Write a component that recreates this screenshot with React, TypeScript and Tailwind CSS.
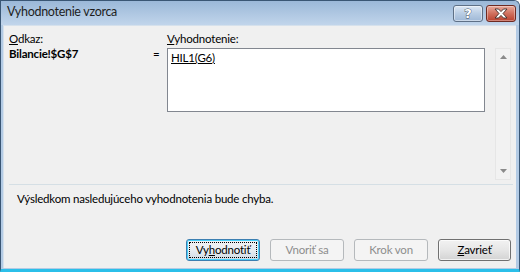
export default function App() {
  const f = "font-['Lato',sans-serif]";
  return (
    <div className={`w-[520px] h-[272px] bg-white ${f} text-black`}>
      <div className="w-[520px] h-[272px] flex flex-col bg-[#b3cbe5] border-l border-t border-r border-[#3a5674] rounded-tr-[6px] overflow-hidden border-b-[3px] border-b-[#2bbfe9]">
        {/* title bar */}
        <div className="h-[24px] shrink-0 flex items-start bg-gradient-to-b from-[#9bb8d8] to-[#c1d5eb] pl-[6px] pr-[3px]">
          <div className="pt-[3px] text-[12.5px] leading-[16px] tracking-[-0.3px] text-[#1e1e1e]">Vyhodnotenie vzorca</div>
          <div className="flex-1" />
          <div className="flex gap-[3px] pt-[4px]">
            <div className="w-[30px] h-[17px] rounded-[3px] border border-[#5e7086] bg-gradient-to-b from-[#dde8f4] via-[#b9cde4] to-[#9fb8d6] flex items-center justify-center shadow-[inset_0_0_0_1px_rgba(255,255,255,0.45)]">
              <span className="font-['DejaVu_Sans',sans-serif] font-bold text-[13px] leading-[13px] text-white [-webkit-text-stroke:0.8px_#3d4a5c] [paint-order:stroke_fill]">?</span>
            </div>
            <div className="w-[30px] h-[17px] rounded-[3px] border border-[#6e2a22] bg-gradient-to-b from-[#e8a99b] via-[#d0705e] to-[#b9402e] flex items-center justify-center shadow-[inset_0_0_0_1px_rgba(255,255,255,0.35)]">
              <svg width="16" height="11" viewBox="0 0 16 11">
                <path d="M2 1 L5.5 1 L8 3.6 L10.5 1 L14 1 L10 5.5 L14 10 L10.5 10 L8 7.4 L5.5 10 L2 10 L6 5.5 Z" fill="#ffffff" stroke="#3b2a28" strokeWidth="0.9" strokeLinejoin="round" />
              </svg>
            </div>
          </div>
        </div>
        {/* body frame */}
        <div className="flex-1 flex pl-[2px] pr-[3px] pb-[1px]">
          <div className="flex-1 flex flex-col bg-[#f0f0f0] border-l border-t border-[#d6e1ec] text-[11.5px] tracking-[-0.2px]">
            {/* top area */}
            <div className="h-[158px] flex pl-[5px] pt-[5px] pr-[3px]">
              <div className="w-[144px] flex flex-col leading-[15px]">
                <div><span className="underline">O</span>dkaz:</div>
                <div className="font-bold">Bilancie!$G$7</div>
              </div>
              <div className="w-[14px] leading-[15px] pt-[15px]">=</div>
              <div className="w-[318px] flex flex-col">
                <div className="leading-[15px]"><span className="underline">V</span>yhodnotenie:</div>
                <div className="mt-[2px] h-[64px] bg-white border border-[#828790] pl-[3px] pt-[1px] leading-[15px]">
                  <span className="underline">HIL1(G6)</span>
                </div>
              </div>
              <div className="w-[10px]" />
              <div className="mt-[17px] w-[16px] h-[132px] bg-[#f2f2f2] border border-[#e6e6e6] flex flex-col items-center justify-between py-[6px]">
                <svg width="7" height="4" viewBox="0 0 7 4"><path d="M3.5 0 L7 4 L0 4 Z" fill="#8a8a8a" /></svg>
                <svg width="7" height="4" viewBox="0 0 7 4"><path d="M0 0 L7 0 L3.5 4 Z" fill="#8a8a8a" /></svg>
              </div>
            </div>
            <div className="mx-[5px] mr-[3px] h-[1px] bg-[#d5dfe5]" />
            {/* message */}
            <div className="pl-[13px] pt-[6px] leading-[15px]">Výsledkom nasledujúceho vyhodnotenia bude chyba.</div>
            <div className="flex-1" />
            {/* buttons */}
            <div className="flex justify-end gap-[10px] pr-[5px] pb-[7px]">
              <div className="w-[74px] h-[22px] rounded-[3px] border border-[#3c7fb1] bg-gradient-to-b from-[#f2f2f2] via-[#e8edf2] to-[#cfd9e3] p-[2px] shadow-[inset_0_0_0_1px_#48d1fb]">
                <div className="w-full h-full border border-dotted border-black flex items-center justify-center leading-[14px]">
                  Vy<span className="underline">h</span>odnotiť
                </div>
              </div>
              <div className="w-[74px] h-[22px] rounded-[3px] border border-[#b5b9bc] bg-[#f4f4f4] flex items-center justify-center text-[#8d8d8d] leading-[14px]">
                Vnoriť sa
              </div>
              <div className="w-[74px] h-[22px] rounded-[3px] border border-[#b5b9bc] bg-[#f4f4f4] flex items-center justify-center text-[#8d8d8d] leading-[14px]">
                Krok von
              </div>
              <div className="w-[73px] h-[22px] rounded-[3px] border border-[#707070] bg-gradient-to-b from-[#f2f2f2] via-[#e6e6e6] to-[#d3d3d3] flex items-center justify-center leading-[14px] shadow-[inset_0_0_0_1px_rgba(255,255,255,0.7)]">
                <span className="underline">Z</span>avrieť
              </div>
            </div>
          </div>
        </div>
      </div>
    </div>
  );
}
